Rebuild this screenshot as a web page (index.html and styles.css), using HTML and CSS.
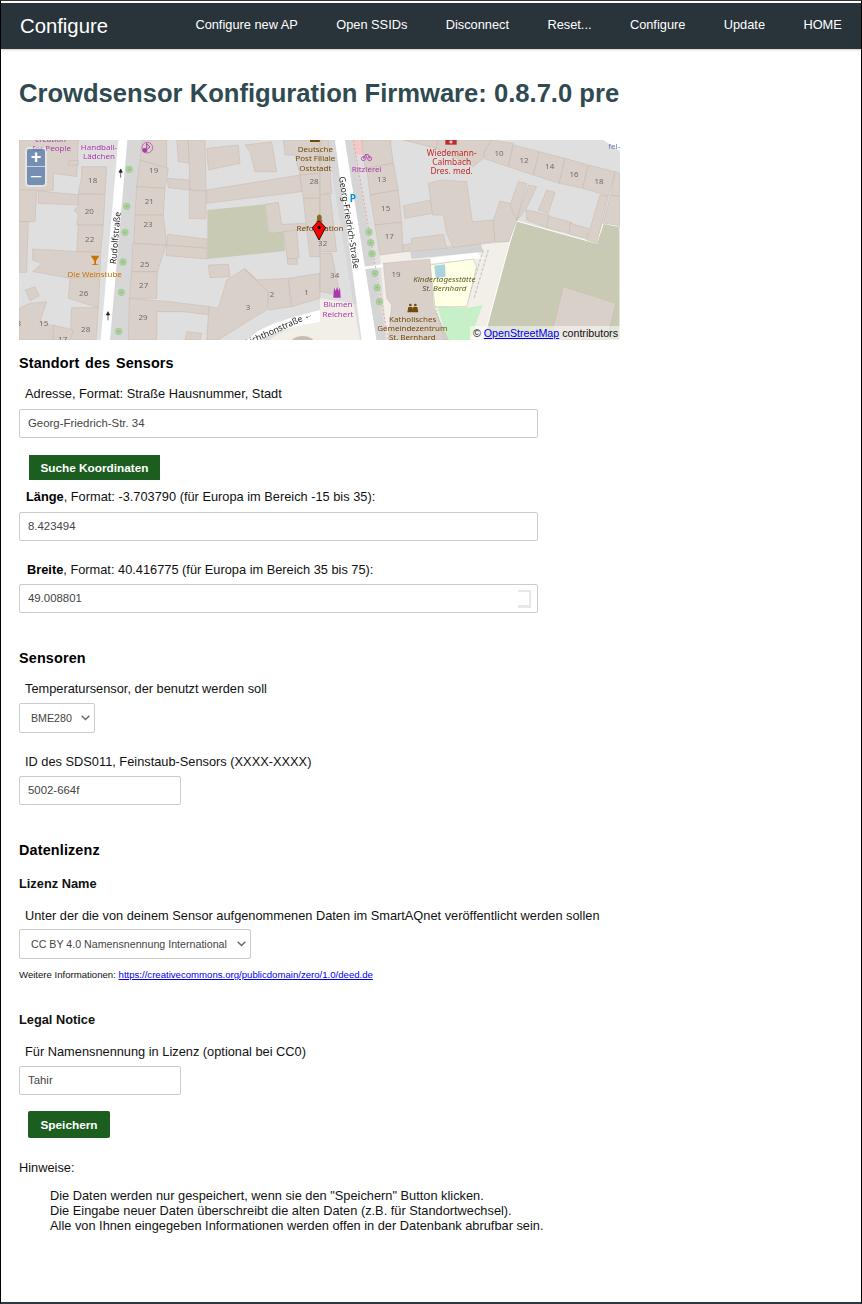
FILE: index.html
```html
<!DOCTYPE html>
<html lang="de">
<head>
<meta charset="utf-8">
<title>Configure</title>
<link rel="stylesheet" href="styles.css">
</head>
<body>
<div class="frame">
  <nav class="nav">
    <a class="brand">Configure</a>
    <ul class="links">
      <li>Configure new AP</li>
      <li>Open SSIDs</li>
      <li>Disconnect</li>
      <li>Reset...</li>
      <li>Configure</li>
      <li>Update</li>
      <li>HOME</li>
    </ul>
  </nav>
  <main class="main">
    <h1 class="title">Crowdsensor Konfiguration Firmware: 0.8.7.0 pre</h1>
    <div class="map">
      <svg class="tiles" width="601" height="200" viewBox="0 0 601 200">
        <rect width="601" height="200" fill="#e0dfdf"/>
        <g transform="scale(.33333) translate(-27 -15)">
          <path class="land" d="M592 225L765 208L775 290L820 285L825 348L592 372Z"/>
          <path class="walk" d="M352 15L392 15L355 615L300 615Z"/>
          <path class="road" d="M325 15L352 15L300 615L272 615Z"/>
          <path class="plaza" d="M760 630C800 590 860 570 930 558L930 630Z"/>
          <path class="road" d="M700 630C730 585 790 560 930 525L930 560C850 575 770 590 735 630Z"/>
          <ellipse cx="878" cy="625" rx="36" ry="22" fill="#c9bdb1"/>
          <g class="bld">
            <path d="M27 15L205 15L200 125L130 115L130 165L85 168L27 165Z"/>
            <path d="M215 95L290 95L285 178L205 175L215 125Z"/>
            <path d="M85 168L215 180L210 210L85 205Z"/>
            <path d="M205 178L285 178L280 270L200 270L205 240L192 225L205 212Z"/>
            <path d="M205 270L280 270L272 352L200 350Z"/>
            <path d="M68 342L125 345L200 350L272 352L270 425L180 430L100 415L68 410L95 385L68 375Z"/>
            <path d="M180 430L270 425L265 518L175 490Z"/>
            <path d="M185 518L265 518L258 615L180 615Z"/>
            <path d="M27 520L60 505L110 500L90 560L135 575L130 615L27 615Z"/>
            <path d="M130 570L190 585L180 615L130 615Z"/>
            <path d="M45 465L75 455L88 483L60 497Z"/>
            <path d="M27 165L80 165L75 260L27 260Z"/>
            <path d="M27 260L55 260L50 412L27 412Z"/>
            <path d="M175 78L205 76L205 90L176 92Z"/>
            <path d="M395 15L470 15L470 100L390 75Z"/>
            <path d="M390 75L475 100L465 160L380 155Z"/>
            <path d="M380 155L465 160L460 240L375 240Z"/>
            <path d="M375 240L460 240L470 330L372 325Z"/>
            <path d="M472 298L590 312L590 340L470 330Z"/>
            <path d="M470 330L590 340L592 372L468 362Z"/>
            <path d="M368 325L468 332L442 410L365 410Z"/>
            <path d="M365 410L442 410L440 490L358 490Z"/>
            <path d="M358 490L480 500L600 515L600 540L520 530L440 530L440 615L355 615Z"/>
            <path d="M500 15L535 15L540 85L505 80Z"/>
            <path d="M472 130L540 135L540 165L475 158Z"/>
            <path d="M535 15L585 15L588 170L540 165Z"/>
            <path d="M538 165L588 168L588 252L538 250Z"/>
            <path d="M590 40L685 30L690 85L595 105Z"/>
            <path d="M705 30L785 20L800 110L735 110L720 50Z"/>
            <path d="M590 165L870 120L875 170L590 205Z"/>
            <path d="M820 15L930 15L930 115L870 120L855 60L825 60Z"/>
            <path d="M870 120L930 115L930 190L880 190Z"/>
            <path d="M765 208L805 202L815 268L885 265L890 285L778 295Z"/>
            <path d="M820 290L860 285L867 368L832 372Z"/>
            <path d="M832 372L862 370L862 388L833 388Z"/>
            <path d="M595 390L655 388L660 425L600 428Z"/>
            <path d="M650 435L705 400L775 470L770 525L720 555L625 615L590 615L597 515L625 520Z"/>
            <path d="M705 405L740 435L835 430L845 515L775 525L775 470Z"/>
            <path d="M835 430L930 415L930 490L845 515Z"/>
            <path d="M880 190L930 190L930 365L900 365L890 285Z"/>
            <path d="M530 590L575 595L570 615L525 615Z"/>
          </g>
          <g class="tree">
            <circle cx="358" cy="103" r="11"/><circle cx="350" cy="214" r="11"/><circle cx="345" cy="292" r="11"/>
            <circle cx="339" cy="381" r="11"/><circle cx="334" cy="472" r="11"/><circle cx="326" cy="589" r="11"/>
          </g>
          <g class="tree-dot">
            <circle cx="358" cy="103" r="2"/><circle cx="350" cy="214" r="2"/><circle cx="345" cy="292" r="2"/>
            <circle cx="339" cy="381" r="2"/><circle cx="334" cy="472" r="2"/><circle cx="326" cy="589" r="2"/>
          </g>
          <path class="arrow" d="M332 128V106M327 112L332 102L337 112Z"/>
          <path class="arrow" d="M294 556V534M289 540L294 530L299 540Z"/>
          <path d="M242 362H268L258 378V388H265V390H246V388H253V378Z" fill="#c77400"/>
          <circle cx="412" cy="38" r="16" fill="none" stroke="#ac39ac" stroke-width="2"/>
          <path d="M410 24V50M410 26L420 36L412 42" fill="none" stroke="#ac39ac" stroke-width="3"/>
          <circle cx="404" cy="46" r="7" fill="#ac39ac"/>
          <rect x="900" y="15" width="30" height="6" fill="#734a08"/>
          <g class="num">
            <text x="431" y="115">19</text><text x="248" y="143">18</text><text x="418" y="208">21</text>
            <text x="238" y="236">20</text><text x="414" y="277">23</text><text x="239" y="320">22</text>
            <text x="404" y="395">25</text><text x="401" y="459">27</text><text x="221" y="482">26</text>
            <text x="786" y="487">2</text><text x="890" y="480">1</text><text x="714" y="525">3</text>
            <text x="399" y="556">29</text><text x="101" y="572">15</text><text x="227" y="592">28</text>
            <text x="158" y="620">17</text><text x="912" y="146">28</text><text x="26" y="572">3</text>
          </g>
          <g class="lbl purple">
            <text x="125" y="48">for People</text>
            <text x="122" y="20">creation</text>
            <text x="267" y="44">Handball-</text>
            <text x="267" y="71">Lädchen</text>
          </g>
          <text class="lbl orange" x="254" y="426">Die Weinstube</text>
          <text class="road-name" transform="translate(318 388) rotate(-85)">Rudolfstraße</text>
          <text class="road-name" transform="translate(712 632) rotate(-24)">Lichthonstraße ←</text>
        </g>
        <g transform="translate(301 -5) scale(.33333)">
          <path d="M180 360L570 320L490 615L200 615Z" fill="#f2efe9"/>
          <path class="land" d="M590 258L830 325L850 265L900 275L900 615L490 615L570 320Z" stroke="#fff" stroke-width="3"/>
          <path d="M0 490L100 505L120 615L0 615Z" fill="#f2efe9"/>
          <path class="walk" d="M20 15L45 15L115 500L100 510Z"/>
          <path class="road" d="M45 15L75 15L170 615L125 615Z"/>
          <path d="M75 15L100 15L200 615L170 615Z" fill="#d6d5d5"/>
          <path d="M98 15L125 15L135 60L108 60Z" fill="#f4c9c5"/>
          <path d="M180 15L215 15L215 30L180 30Z" fill="#f4c9c5"/>
          <path class="road" d="M850 15L900 15L900 48Z"/>
          <path class="road" d="M130 395L330 370L470 352L490 370L330 385L135 402Z"/>
          <path d="M270 350L480 320L490 350L275 372Z" fill="#d2d2d2"/>
          <path d="M505 345L462 490M490 345L445 490" fill="none" stroke="#ccc" stroke-width="4" stroke-dasharray="10 4"/>
          <path d="M352 515L445 518L488 510L450 615L382 615Z" fill="#c8f0c8"/>
          <path d="M330 390L460 372L470 395L440 515L345 515Z" fill="#ffffe5" stroke="#b9b4a0" stroke-width="1.5"/>
          <path d="M343 392L375 388L377 425L347 428Z" fill="#a9d3e0"/>
          <g class="bld">
            <path d="M0 15L25 15L35 175L0 180Z"/>
            <path d="M0 180L30 175L50 350L0 350Z"/>
            <path d="M0 355L35 355L60 480L0 470Z"/>
            <path d="M125 15L210 15L220 85L135 100Z"/>
            <path d="M140 100L220 85L235 165L150 180Z"/>
            <path d="M150 180L235 165L245 262L165 270Z"/>
            <path d="M165 270L245 262L250 350L180 360Z"/>
            <path d="M275 310L370 298L380 340L250 350L250 330L275 325Z"/>
            <path d="M250 212L332 195L338 235L255 250Z"/>
            <path d="M325 145L365 135L440 140L457 260L520 255L525 320L400 338L380 295L370 240L338 240Z"/>
            <path d="M520 255L540 198L595 212L590 258L565 320L525 320Z"/>
            <path d="M250 15L355 15L348 40Z"/>
            <path d="M355 15L515 15L495 45L490 70L460 95L348 40Z"/>
            <path d="M495 45L515 15L580 25L565 95L490 70Z"/>
            <path d="M580 30L658 50L640 120L565 95Z"/>
            <path d="M658 50L735 70L718 145L640 120Z"/>
            <path d="M735 70L805 90L788 160L718 145Z"/>
            <path d="M805 90L885 110L865 183L788 160Z"/>
            <path d="M885 110L900 115L900 185L872 180Z"/>
            <path d="M570 210L595 140L620 145L590 255Z"/>
            <path d="M590 258L625 150L650 155L618 222Z"/>
            <path d="M655 225L680 165L705 172L685 235Z"/>
            <path d="M618 225L688 240L680 278L620 255Z"/>
            <path d="M685 243L757 263L750 295L680 278Z"/>
            <path d="M750 265L805 280L800 310L748 297Z"/>
            <path d="M800 315L840 180L865 185L830 325Z"/>
            <path d="M850 265L872 180L900 185L900 275L885 270Z"/>
            <path d="M730 455L888 505L860 615L690 615Z"/>
            <path d="M190 385L330 372L340 515L385 615L205 615L215 510L200 490Z"/>
          </g>
          <path d="M100 15L205 615" fill="none" stroke="#f08c80" stroke-width="2.5" stroke-dasharray="5 7"/>
          <path d="M345 515L375 615" fill="none" stroke="#b8b8b8" stroke-width="2.5" stroke-dasharray="5 5"/>
          <g class="tree">
            <circle cx="147" cy="291" r="11"/><circle cx="152" cy="323" r="11"/><circle cx="156" cy="356" r="11"/>
            <circle cx="165" cy="415" r="11"/><circle cx="171" cy="458" r="11"/><circle cx="178" cy="500" r="11"/>
          </g>
          <g class="tree-dot">
            <circle cx="147" cy="291" r="2"/><circle cx="152" cy="323" r="2"/><circle cx="156" cy="356" r="2"/>
            <circle cx="165" cy="415" r="2"/><circle cx="171" cy="458" r="2"/><circle cx="178" cy="500" r="2"/>
          </g>
          <rect x="376" y="15" width="34" height="14" fill="#bf2a2a"/>
          <path d="M393 16V26M388 21H398" stroke="#fff" stroke-width="3"/>
          <text class="blue-p" x="89" y="201">P</text>
          <g fill="none" stroke="#ac39ac" stroke-width="2.5">
            <circle cx="130" cy="71" r="6"/><circle cx="149" cy="71" r="6"/><path d="M130 71L137 58L146 60L149 71M137 58L140 70"/>
          </g>
          <path d="M42 458L40 488H62L60 458L55 468L51 456L47 468Z" fill="#ac39ac"/>
          <g fill="#734a08">
            <circle cx="271" cy="510" r="4"/><circle cx="286" cy="510" r="4"/>
            <path d="M265 516H277L281 532H262ZM280 516H292L295 532H277Z"/>
          </g>
          <g class="num">
            <text x="537" y="63">10</text><text x="612" y="83">12</text><text x="689" y="103">14</text>
            <text x="762" y="125">16</text><text x="837" y="146">18</text><text x="185" y="140">13</text>
            <text x="197" y="227">15</text><text x="208" y="311">17</text><text x="228" y="426">19</text>
            <text x="44" y="428">34</text><text x="8" y="333">32</text>
          </g>
          <g class="lbl-big red">
            <text x="395" y="62">Wiedemann-</text>
            <text x="395" y="90">Calmbach</text>
            <text x="395" y="118">Dres. med.</text>
          </g>
          <g class="lbl purple">
            <text x="140" y="110">Ritzlerei</text>
            <text x="54" y="517">Blumen</text>
            <text x="54" y="545">Reichert</text>
          </g>
          <g class="lbl brown">
            <text x="278" y="560">Katholisches</text>
            <text x="277" y="588">Gemeindezentrum</text>
            <text x="277" y="614">St. Bernhard</text>
          </g>
          <g class="lbl olive">
            <text x="373" y="441">Kindertagesstätte</text>
            <text x="373" y="469">St. Bernhard</text>
          </g>
          <text class="fel" x="865" y="42">fel-</text>
          <text class="road-name" transform="translate(57 126) rotate(81)">Georg-Friedrich-Straße</text>
        </g>
        <g transform="scale(.33333) translate(-27 -15)">
          <path d="M921 246C921 236 935 236 935 246V257H921ZM918 257H938V260H918Z" fill="#8a6a20"/>
          <g class="lbl brown">
            <text x="916" y="50">Deutsche</text>
            <text x="916" y="79">Post Filiale</text>
            <text x="916" y="107">Oststadt</text>
            <text x="930" y="289">Reformation</text>
          </g>
        </g>
      </svg>
      <svg class="pin" width="16" height="23" viewBox="0 0 16 23">
        <path d="M6.8 3.6Q8 2.6 9.2 3.6L14.6 9.6L8 22L1.4 9.6Z" fill="#f00" stroke="#000" stroke-width=".8"/>
        <circle cx="8" cy="9.5" r="1.7" fill="#000"/>
      </svg>
      <div class="zoom">
        <span class="zoom-btn plus">+</span>
        <span class="zoom-btn minus">–</span>
      </div>
      <div class="attribution">© <a class="link" href="#">OpenStreetMap</a> contributors</div>
    </div>

    <h3 class="heading first">Standort des Sensors</h3>
    <label class="label indent-6 gap-12">Adresse, Format: Straße Hausnummer, Stadt</label>
    <input class="input wide gap-6" type="text" value="Georg-Friedrich-Str. 34">
    <button class="btn search" type="button">Suche Koordinaten</button>
    <label class="label indent-7 gap-8"><b>Länge</b>, Format: -3.703790 (für Europa im Bereich -15 bis 35):</label>
    <input class="input wide gap-6" type="text" value="8.423494">
    <label class="label indent-8 gap-20"><b>Breite</b>, Format: 40.416775 (für Europa im Bereich 35 bis 75):</label>
    <div class="input-wrap gap-5">
      <input class="input wide" type="text" value="49.008801">
      <span class="spinner"></span>
    </div>

    <h3 class="heading section">Sensoren</h3>
    <label class="label indent-6 gap-12">Temperatursensor, der benutzt werden soll</label>
    <div class="select-wrap temp gap-5">
      <select class="select"><option>BME280</option></select>
      <svg class="chevron" width="9" height="6" viewBox="0 0 9 6"><path d="M.7 .8L4.5 4.6L8.3 .8" fill="none" stroke="#666" stroke-width="1.4"/></svg>
    </div>
    <label class="label indent-6 gap-20">ID des SDS011, Feinstaub-Sensors (XXXX-XXXX)</label>
    <input class="input short gap-5" type="text" value="5002-664f">

    <h3 class="heading section">Datenlizenz</h3>
    <h4 class="subheading gap-14">Lizenz Name</h4>
    <label class="label indent-6 gap-13">Unter der die von deinem Sensor aufgenommenen Daten im SmartAQnet veröffentlicht werden sollen</label>
    <div class="select-wrap licence gap-4">
      <select class="select"><option>CC BY 4.0 Namensnennung International</option></select>
      <svg class="chevron" width="9" height="6" viewBox="0 0 9 6"><path d="M.7 .8L4.5 4.6L8.3 .8" fill="none" stroke="#666" stroke-width="1.4"/></svg>
    </div>
    <p class="note">Weitere Informationen: <a class="link" href="#">https://creativecommons.org/publicdomain/zero/1.0/deed.de</a></p>

    <h4 class="subheading legal">Legal Notice</h4>
    <label class="label indent-6 gap-13">Für Namensnennung in Lizenz (optional bei CC0)</label>
    <input class="input short gap-5" type="text" value="Tahir">
    <button class="btn save" type="button">Speichern</button>

    <p class="hint-title">Hinweise:</p>
    <div class="hints">
      Die Daten werden nur gespeichert, wenn sie den "Speichern" Button klicken.<br>
      Die Eingabe neuer Daten überschreibt die alten Daten (z.B. für Standortwechsel).<br>
      Alle von Ihnen eingegeben Informationen werden offen in der Datenbank abrufbar sein.
    </div>
  </main>
</div>
</body>
</html>
```
FILE: styles.css
```css
* { box-sizing: border-box; }
html, body { margin: 0; padding: 0; background: #fff; }
body { font-family: "Liberation Sans", Arial, sans-serif; color: #111; }

.frame {
  width: 862px;
  height: 1304px;
  overflow: hidden;
  border: 1px solid #000;
  border-top-color: #333;
  border-bottom: 2px solid #2b3a40;
  padding-top: 2px;
  background: #fff;
}

.nav {
  display: flex;
  align-items: center;
  justify-content: space-between;
  height: 46px;
  background: #29333a;
  color: #fff;
  box-shadow: 0 1px 2px rgba(0, 0, 0, .2);
}
.brand { margin-left: 19px; font-size: 20.3px; }
.links { display: flex; list-style: none; margin: -4px 0 0; padding: 0; font-size: 12.8px; }
.links li { padding: 0 19.2px; }

.main { padding-left: 18px; }
.title {
  margin: 28px 0 31px;
  font-size: 25.6px;
  line-height: 32px;
  font-weight: 700;
  color: #2f4a50;
  white-space: nowrap;
}

.map { position: relative; width: 601px; height: 200px; overflow: hidden; }
.tiles { display: block; filter: blur(.35px); }
.land { fill: #c9cab3; }
.road { fill: #fff; }
.walk { fill: #d8d7d7; }
.plaza { fill: #f2efe9; }
.bld path { fill: #d9d0c9; stroke: #c6b9ae; stroke-width: 1.5; }
.tree circle { fill: #a6cf9e; }
.tree-dot circle { fill: #c8894f; }
.arrow { fill: #222; stroke: #222; stroke-width: 2; }
.num text { font: 24px "Noto Sans", sans-serif; fill: #6f6b68; text-anchor: middle; }
.lbl text, text.lbl { font: 24px "Noto Sans", sans-serif; text-anchor: middle; }
.lbl-big text { font: 25px "Noto Sans", sans-serif; text-anchor: middle; }
.purple { fill: #ac39ac; }
.orange { fill: #c77400; }
.brown { fill: #734a08; }
.red { fill: #bf2a2a; }
.olive { fill: #5c5c20; }
.olive text { font-style: italic; }
.road-name { font: 26px "Noto Sans", sans-serif; fill: #222; }
.blue-p { font: bold 30px "Noto Sans", sans-serif; fill: #0092da; }
.fel { font: 24px "Noto Sans", sans-serif; fill: #6a7fb5; }

.pin { position: absolute; left: 292px; top: 78px; }
.zoom {
  position: absolute;
  left: 6px;
  top: 7px;
  width: 22px;
  padding: 2px;
  border-radius: 4px;
  background: rgba(255, 255, 255, .4);
}
.zoom-btn {
  display: block;
  width: 18px;
  height: 18px;
  background: rgba(0, 60, 136, .5);
  color: #fff;
  text-align: center;
}
.plus { font: bold 18px/17px "Liberation Sans", sans-serif; border-radius: 2px 2px 0 0; border-bottom: 1px solid rgba(255, 255, 255, .6); }
.minus { font: 18px/17px "Liberation Sans", sans-serif; border-radius: 0 0 2px 2px; }
.attribution {
  position: absolute;
  right: 0;
  bottom: 0;
  padding: 0 2px 0 3px;
  background: rgba(255, 255, 255, .5);
  font-size: 10.7px;
  line-height: 14px;
  color: #111;
}
.link { color: #00e; text-decoration: underline; }

.heading { margin: 0; font-size: 14.4px; line-height: 20px; font-weight: 700; color: #000; letter-spacing: .15px; word-spacing: 1.5px; }
.heading.first { margin-top: 13px; }
.heading.section { margin-top: 35px; }
.subheading { margin: 0; font-size: 12.8px; line-height: 20px; font-weight: 700; color: #111; }
.subheading.legal { margin-top: 29px; }

.label { display: block; font-size: 12.8px; line-height: 18px; color: #111; white-space: nowrap; }
.label b { color: #000; }
.indent-6 { margin-left: 6px; }
.indent-7 { margin-left: 7px; }
.indent-8 { margin-left: 8px; }
.gap-4 { margin-top: 4px; }
.gap-5 { margin-top: 5px; }
.gap-6 { margin-top: 6px; }
.gap-8 { margin-top: 8px; }
.gap-12 { margin-top: 12px; }
.gap-13 { margin-top: 13px; }
.gap-14 { margin-top: 14px; }
.gap-20 { margin-top: 20px; }

.input {
  display: block;
  height: 29px;
  padding: 0 8px 1px;
  border: 1px solid #ccc;
  border-radius: 2px;
  background: #fff;
  font: 11.4px "Liberation Sans", sans-serif;
  color: #444;
  outline: none;
}
.wide { width: 519px; }
.short { width: 162px; }
.input-wrap { position: relative; width: 519px; }
.spinner {
  position: absolute;
  right: 7px;
  top: 6px;
  width: 13px;
  height: 18px;
  border-top: 2px solid #e8e8e8;
  border-right: 2px solid #e8e8e8;
  border-bottom: 3px solid #e8e8e8;
}

.select-wrap { position: relative; height: 30px; }
.temp { width: 76px; }
.licence { width: 232px; }
.select {
  display: block;
  width: 100%;
  height: 30px;
  padding: 0 18px 0 11px;
  border: 1px solid #ccc;
  border-radius: 2px;
  background: #fff;
  font: 10.67px "Liberation Sans", sans-serif;
  color: #444;
  appearance: none;
  -webkit-appearance: none;
}
.chevron { position: absolute; right: 5px; top: 12px; pointer-events: none; }

.note { margin: 10px 0 0; font-size: 9.6px; line-height: 12px; color: #111; }

.btn {
  display: block;
  border: 0;
  background: #1b5e20;
  color: #fff;
  font: bold 11.8px "Liberation Sans", sans-serif;
  padding: 0;
}
.search { width: 131px; height: 25px; margin: 17px 0 0 10px; }
.save { width: 82px; height: 27px; margin: 16px 0 0 9px; border-radius: 2px; }

.hint-title { margin: 21px 0 0; font-size: 12.8px; line-height: 18px; }
.hints { margin: 11px 0 0 31px; font-size: 12.8px; line-height: 15px; }
```
